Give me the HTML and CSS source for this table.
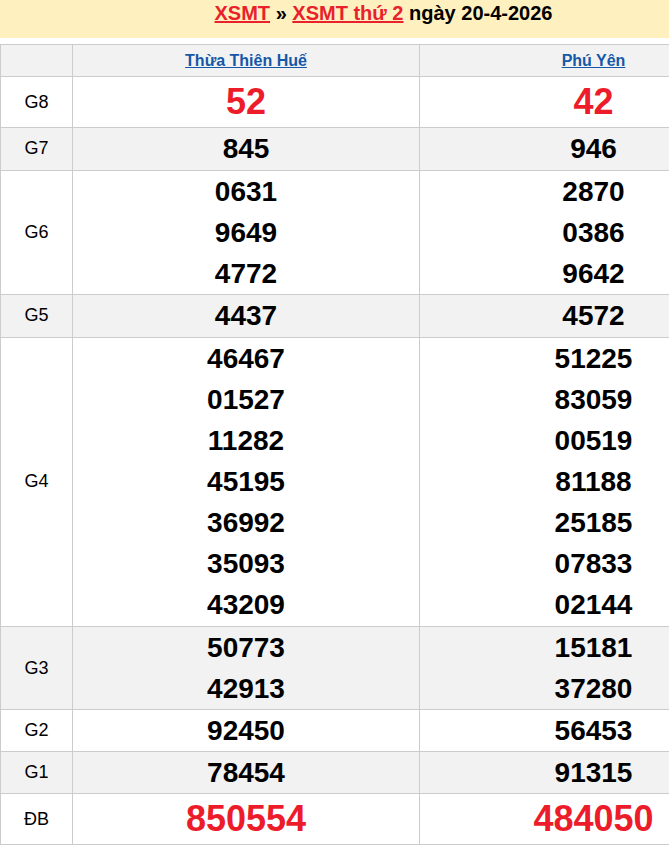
FILE: index.html
```html
<!DOCTYPE html>
<html lang="vi">
<head>
<meta charset="utf-8">
<title>XSMT thứ 2 ngày 20-4-2026</title>
<link rel="stylesheet" href="styles.css">
</head>
<body>
<div class="page">
  <h2 class="title"><a href="#">XSMT</a> » <a href="#">XSMT thứ 2</a> ngày 20-4-2026</h2>
  <table class="kq">
    <colgroup><col class="c-lbl"><col class="c-prov"><col class="c-prov2"></colgroup>
    <thead>
      <tr><th></th><th><a href="#">Thừa Thiên Huế</a></th><th><a href="#">Phú Yên</a></th></tr>
    </thead>
    <tbody>
      <tr><td class="lbl">G8</td><td><div class="num red">52</div></td><td><div class="num red">42</div></td></tr>
      <tr class="alt pad"><td class="lbl">G7</td><td><div class="num">845</div></td><td><div class="num">946</div></td></tr>
      <tr><td class="lbl">G6</td><td><div class="num">0631</div><div class="num">9649</div><div class="num">4772</div></td><td><div class="num">2870</div><div class="num">0386</div><div class="num">9642</div></td></tr>
      <tr class="alt pad"><td class="lbl">G5</td><td><div class="num">4437</div></td><td><div class="num">4572</div></td></tr>
      <tr class="pad"><td class="lbl">G4</td>
        <td><div class="num">46467</div><div class="num">01527</div><div class="num">11282</div><div class="num">45195</div><div class="num">36992</div><div class="num">35093</div><div class="num">43209</div></td>
        <td><div class="num">51225</div><div class="num">83059</div><div class="num">00519</div><div class="num">81188</div><div class="num">25185</div><div class="num">07833</div><div class="num">02144</div></td></tr>
      <tr class="alt"><td class="lbl">G3</td><td><div class="num">50773</div><div class="num">42913</div></td><td><div class="num">15181</div><div class="num">37280</div></td></tr>
      <tr><td class="lbl">G2</td><td><div class="num">92450</div></td><td><div class="num">56453</div></td></tr>
      <tr class="alt"><td class="lbl">G1</td><td><div class="num">78454</div></td><td><div class="num">91315</div></td></tr>
      <tr><td class="lbl">ĐB</td><td><div class="num red">850554</div></td><td><div class="num red">484050</div></td></tr>
    </tbody>
  </table>
</div>
</body>
</html>
```
FILE: styles.css
```css
html, body {
  margin: 0;
  padding: 0;
  overflow: hidden;
  background: #fff;
}
body {
  font-family: "Liberation Sans", Arial, sans-serif;
  color: #000;
}
.page {
  width: 767px;
}
.title {
  margin: 0 0 6px 0;
  height: 38px;
  line-height: 26px;
  background: #fff1bf;
  font-size: 20px;
  font-weight: bold;
  text-align: center;
  color: #000;
}
.title a {
  color: #e8212c;
  text-decoration: underline;
}
.kq {
  width: 767px;
  border-collapse: collapse;
  table-layout: fixed;
}
.c-lbl { width: 72px; }
.c-prov { width: 347px; }
.c-prov2 { width: 348px; }
.kq th, .kq td {
  border: 1px solid #cccccc;
  padding: 0;
  text-align: center;
  vertical-align: middle;
}
.kq th {
  height: 31px;
  background: #f2f2f2;
  font-size: 16px;
  font-weight: bold;
}
.kq th a {
  color: #1558a8;
  text-decoration: underline;
}
.kq tr.alt td {
  background: #f2f2f2;
}
.kq tr.pad td {
  padding-bottom: 1px;
}
.lbl {
  font-size: 18px;
}
.num {
  font-size: 28px;
  font-weight: bold;
  line-height: 41px;
}
.num.red {
  color: #ec1c2a;
  font-size: 36px;
  line-height: 50px;
}
```
